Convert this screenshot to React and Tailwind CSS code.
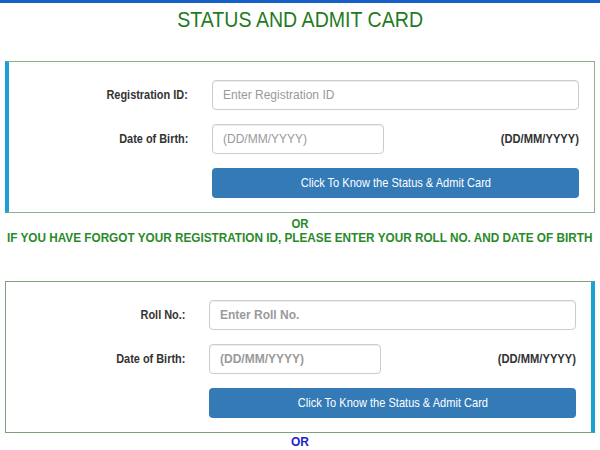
export default function App() {
  const Label = ({ children }) => (
    <div className="w-[179px] text-right text-[13px] font-bold text-[#333]">
      <span className="inline-block scale-x-[0.84] origin-right">{children}</span>
    </div>
  );
  const Button = () => (
    <button className="mt-[14px] ml-[203px] w-[calc(100%-203px)] h-[30px] bg-[#337ab7] rounded-[4px] text-white text-[13px] flex items-center justify-center">
      <span className="inline-block scale-x-[0.85]">Click To Know the Status &amp; Admit Card</span>
    </button>
  );
  const Hint = () => (
    <div className="flex-1 text-right text-[13px] font-bold text-[#333]">
      <span className="inline-block scale-x-[0.86] origin-right">(DD/MM/YYYY)</span>
    </div>
  );
  const inputCls =
    "h-[30px] border border-[#cccccc] rounded-[4px] px-[10px] text-[12px] text-[#555] outline-none shadow-[inset_0_1px_1px_rgba(0,0,0,0.075)]";
  return (
    <div className="w-[600px] h-[450px] bg-white overflow-hidden font-['Liberation_Sans',Arial,sans-serif]">
      <div className="h-[3px] bg-[#1560c4]" />
      <h1 className="mt-[4px] text-center text-[22px] leading-[26px] text-[#1f7a1f]">
        <span className="inline-block scale-x-[0.89]">STATUS AND ADMIT CARD</span>
      </h1>

      <div className="mt-[28px] mx-[5px] border border-[#8fae8f] border-l-[4px] border-l-[#1ca0d4] pt-[18px] pb-[14px] pr-[15px]">
        <div className="flex items-center">
          <Label>Registration ID:</Label>
          <input className={`${inputCls} ml-[24px] flex-1 placeholder:text-[#999]`} placeholder="Enter Registration ID" />
        </div>
        <div className="flex items-center mt-[14px]">
          <Label>Date of Birth:</Label>
          <input className={`${inputCls} ml-[24px] w-[172px] placeholder:text-[#999]`} placeholder="(DD/MM/YYYY)" />
          <Hint />
        </div>
        <Button />
      </div>

      <div className="mt-[4px] text-center text-[12px] leading-[14px] font-bold text-[#2a8a2a]">
        <span className="inline-block scale-x-[0.95]">OR</span>
      </div>
      <div className="text-center text-[12px] leading-[14px] font-bold text-[#2a8a2a] whitespace-nowrap">
        <span className="inline-block scale-x-[0.98]">
          IF YOU HAVE FORGOT YOUR REGISTRATION ID, PLEASE ENTER YOUR ROLL NO. AND DATE OF BIRTH
        </span>
      </div>

      <div className="mt-[36px] mx-[5px] border border-[#7f9f7f] border-r-[4px] border-r-[#1ca0d4] pt-[18px] pb-[14px] pr-[15px]">
        <div className="flex items-center">
          <Label>Roll No.:</Label>
          <input className={`${inputCls} ml-[24px] flex-1 font-bold placeholder:text-[#9a9a9a]`} placeholder="Enter Roll No." />
        </div>
        <div className="flex items-center mt-[14px]">
          <Label>Date of Birth:</Label>
          <input className={`${inputCls} ml-[24px] w-[172px] font-bold placeholder:text-[#9a9a9a]`} placeholder="(DD/MM/YYYY)" />
          <Hint />
        </div>
        <Button />
      </div>

      <div className="mt-[2px] text-center text-[12px] leading-[14px] font-bold text-[#2323c8]">
        <span className="inline-block">OR</span>
      </div>
    </div>
  );
}
